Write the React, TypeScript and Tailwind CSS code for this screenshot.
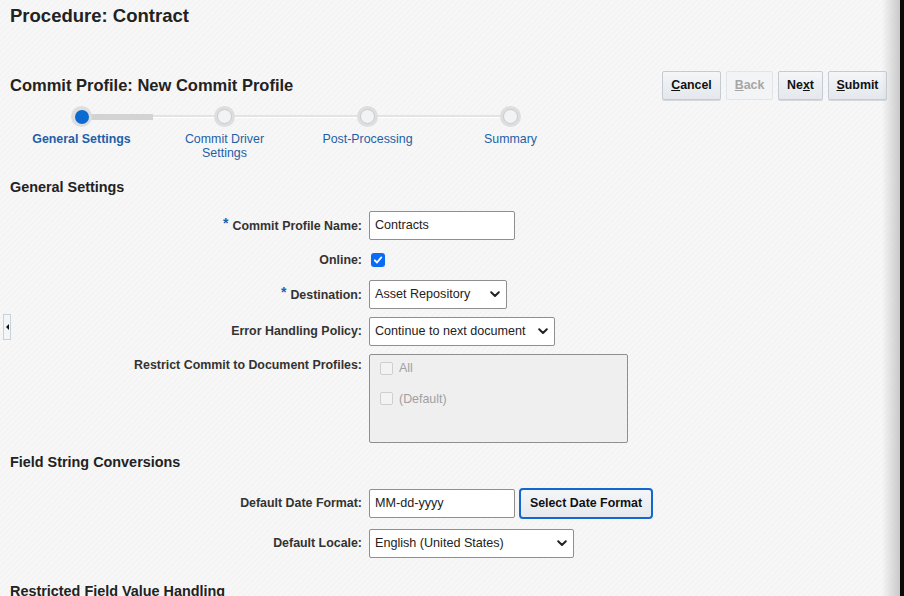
import React from "react";

const Chevron = () => (
  <svg width="10" height="7" viewBox="0 0 10 7" className="shrink-0">
    <path d="M1.2 1.3 L5 5 L8.8 1.3" fill="none" stroke="#222" strokeWidth="2" strokeLinecap="round" strokeLinejoin="round" />
  </svg>
);

const Label = ({ children, req, top }: { children: React.ReactNode; req?: boolean; top?: boolean }) => (
  <div className={`w-[369px] shrink-0 pr-[7px] flex justify-end ${top ? "items-start pt-[2px]" : "items-center"}`}>
    <span className="text-[12.4px] font-bold text-[#333]">
      {req && <span className="text-[#1c62b5] text-[14px] mr-[4px] relative top-[-2px]">*</span>}
      {children}
    </span>
  </div>
);

const TextBox = ({ value, w }: { value: string; w: string }) => (
  <div className={`${w} h-[29px] bg-white border border-[#8f8f8f] rounded-[2px] flex items-center px-[5px] text-[12.6px] text-[#222]`}>
    {value}
  </div>
);

const SelectBox = ({ value, w }: { value: string; w: string }) => (
  <div className={`${w} h-[29px] bg-white border border-[#8f8f8f] rounded-[2px] flex items-center justify-between pl-[5px] pr-[6px] text-[12.6px] text-[#222]`}>
    <span>{value}</span>
    <Chevron />
  </div>
);

const Btn = ({ children, disabled, w }: { children: React.ReactNode; disabled?: boolean; w: string }) => (
  <div
    className={`${w} h-[29px] flex items-center justify-center rounded-[2px] border text-[12.4px] font-bold ${
      disabled
        ? "border-[#e2e5e8] bg-[#f3f4f6] text-[#a6a6a6]"
        : "border-[#c4cbd2] bg-gradient-to-b from-[#f4f6f8] to-[#e4e8ec] text-[#111] shadow-[0_1px_0_#d5d9dd]"
    }`}
  >
    {children}
  </div>
);

const Step = ({ label, active, bold }: { label: React.ReactNode; active?: boolean; bold?: boolean }) => (
  <div className="w-[143px] flex flex-col items-center">
    <div className="h-[21px] w-[21px] rounded-full bg-[#dedede] flex items-center justify-center relative z-10">
      {active ? (
        <div className="h-[14px] w-[14px] rounded-full bg-[#0b6bd0]" />
      ) : (
        <div className="h-[15px] w-[15px] rounded-full bg-[#f1f3f5] border border-[#c7ccd1]" />
      )}
    </div>
    <div className={`mt-[5px] text-[12.4px] leading-[14px] text-center text-[#1f5fa8] ${bold ? "font-bold" : ""}`}>{label}</div>
  </div>
);

export default function App() {
  return (
    <div
      className="relative w-[904px] h-[596px] overflow-hidden bg-[#f5f5f5] bg-[repeating-linear-gradient(135deg,#f4f4f4_0px,#f4f4f4_2px,#f7f7f7_2px,#f7f7f7_4px)]"
      style={{ fontFamily: '"Liberation Sans", Arial, sans-serif' }}
    >
      <div className="pl-[10px] pt-[5px]">
        <h1 className="text-[18.5px] leading-[22px] font-bold text-[#222]">Procedure: Contract</h1>

        <div className="mt-[44px] flex items-center justify-between pr-[17px] h-[29px]">
          <h2 className="text-[16.5px] font-bold text-[#222]">Commit Profile: New Commit Profile</h2>
          <div className="flex gap-[5px]">
            <Btn w="w-[59px]"><span><span className="underline">C</span>ancel</span></Btn>
            <Btn w="w-[47px]" disabled><span><span className="underline">B</span>ack</span></Btn>
            <Btn w="w-[45px]"><span>Ne<span className="underline">x</span>t</span></Btn>
            <Btn w="w-[59px]"><span><span className="underline">S</span>ubmit</span></Btn>
          </div>
        </div>

        {/* train */}
        <div className="relative mt-[6px] flex">
          <div className="absolute left-[71px] w-[428px] top-[9px] h-[3px] bg-[#e3e3e3] border-b border-white" />
          <div className="absolute left-[71px] w-[72px] top-[8px] h-[6px] bg-[#d3d3d3]" />
          <Step label="General Settings" active bold />
          <Step label={<>Commit Driver<br />Settings</>} />
          <Step label="Post-Processing" />
          <Step label="Summary" />
        </div>

        <h3 className="mt-[19px] text-[14.4px] leading-[17px] font-bold text-[#222]">General Settings</h3>
      </div>

      {/* form */}
      <div className="mt-[15px] flex flex-col">
        <div className="flex h-[29px]">
          <Label req>Commit Profile Name:</Label>
          <TextBox value="Contracts" w="w-[146px]" />
        </div>
        <div className="flex h-[28px] mt-[6px]">
          <Label>Online:</Label>
          <div className="flex items-center pl-[2px]">
            <div className="h-[14px] w-[14px] rounded-[3px] bg-[#0a6cf5] flex items-center justify-center">
              <svg width="10" height="10" viewBox="0 0 10 10">
                <path d="M1.8 5.3 L4 7.5 L8.3 2.4" fill="none" stroke="white" strokeWidth="1.8" strokeLinecap="round" strokeLinejoin="round" />
              </svg>
            </div>
          </div>
        </div>
        <div className="flex h-[29px] mt-[6px]">
          <Label req>Destination:</Label>
          <SelectBox value="Asset Repository" w="w-[138px]" />
        </div>
        <div className="flex h-[29px] mt-[8px]">
          <Label>Error Handling Policy:</Label>
          <SelectBox value="Continue to next document" w="w-[186px]" />
        </div>
        <div className="flex mt-[8px]">
          <Label top>Restrict Commit to Document Profiles:</Label>
          <div className="w-[259px] h-[89px] bg-[#efeff0] border border-[#8f8f8f] rounded-[2px] pl-[10px] pt-[4px] flex flex-col gap-[12px]">
            <div className="flex items-center gap-[6px] text-[12.4px] text-[#a0a0a0]">
              <div className="h-[13px] w-[13px] rounded-[2px] border border-[#cfcfcf] bg-[#f3f3f3]" />
              All
            </div>
            <div className="flex items-center gap-[6px] text-[12.4px] text-[#a0a0a0]">
              <div className="h-[13px] w-[13px] rounded-[2px] border border-[#cfcfcf] bg-[#f3f3f3]" />
              (Default)
            </div>
          </div>
        </div>
      </div>

      <h3 className="pl-[10px] mt-[11px] text-[14.4px] leading-[17px] font-bold text-[#222]">Field String Conversions</h3>

      <div className="mt-[18px] flex flex-col">
        <div className="flex h-[29px] items-center">
          <Label>Default Date Format:</Label>
          <TextBox value="MM-dd-yyyy" w="w-[146px]" />
          <div className="ml-[4px] h-[31px] w-[134px] rounded-[4px] border-2 border-[#1466d1] bg-gradient-to-b from-[#f4f6f8] to-[#e6e9ed] flex items-center justify-center text-[12.4px] font-bold text-[#111]">
            Select Date Format
          </div>
        </div>
        <div className="flex h-[29px] mt-[11px]">
          <Label>Default Locale:</Label>
          <SelectBox value="English (United States)" w="w-[205px]" />
        </div>
      </div>

      <h3 className="pl-[10px] mt-[25px] text-[14.4px] leading-[17px] font-bold text-[#222]">Restricted Field Value Handling</h3>

      {/* left collapse handle */}
      <div className="absolute left-[3px] top-[314px] w-[8px] h-[26px] border border-[#c9d1d9] bg-[#f3f5f7] flex items-center justify-center">
        <div className="w-0 h-0 border-y-[3px] border-y-transparent border-r-[3px] border-r-[#111]" />
      </div>

      {/* right window edge */}
      <div className="absolute top-0 right-[4px] w-[18px] h-full bg-gradient-to-r from-transparent to-[#c9c9c9]" />
      <div className="absolute top-0 right-0 w-[4px] h-full bg-[#0a0a0a]" />
    </div>
  );
}
